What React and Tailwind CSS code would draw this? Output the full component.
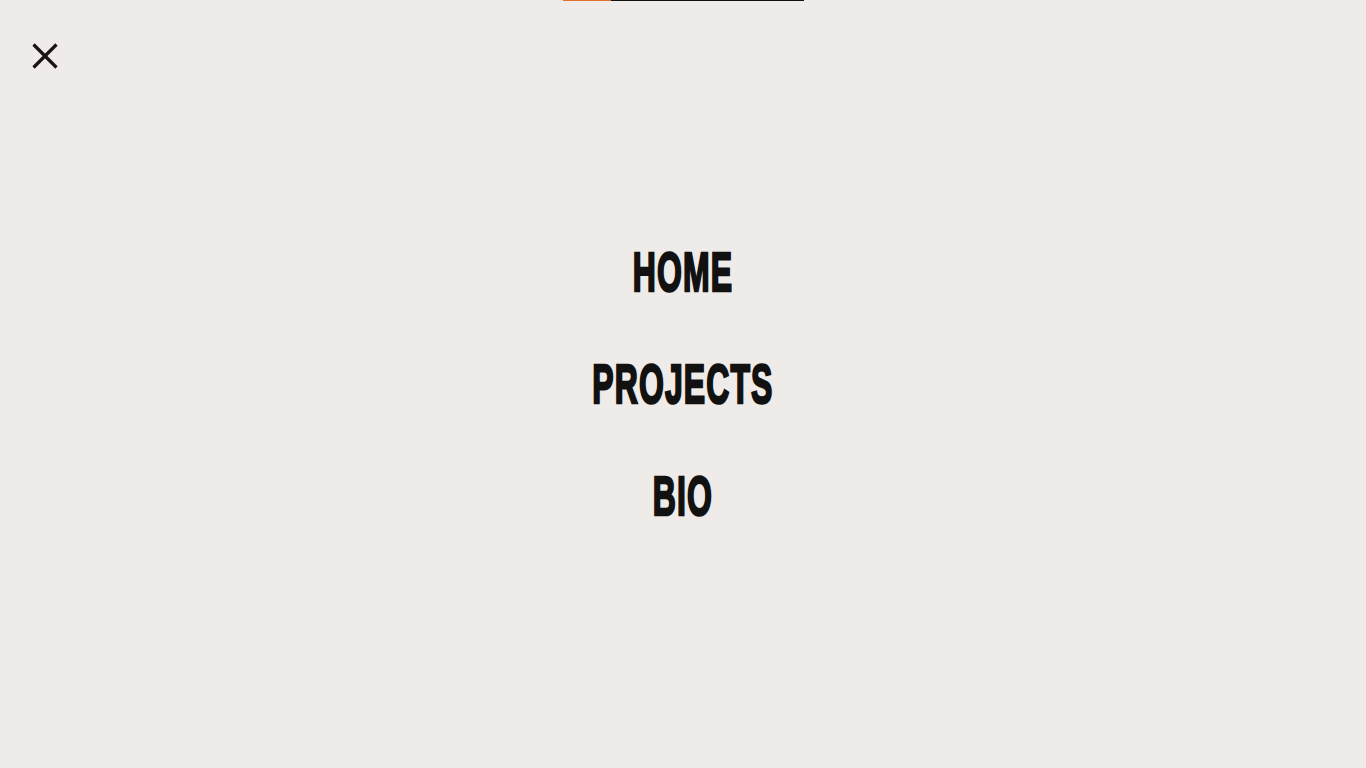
export default function App() {
  const links = ['HOME', 'PROJECTS', 'BIO'];
  return (
    <div className="relative h-screen w-full overflow-hidden bg-[#efebe8]">
      {/* progress bar */}
      <div className="absolute top-0 left-[563px] flex h-px w-[241px]">
        <div className="w-[48px] bg-[#e0702a]" />
        <div className="flex-1 bg-[#111111]" />
      </div>

      {/* close */}
      <button type="button" className="absolute left-[30px] top-[41px] flex h-[30px] w-[30px] items-center justify-center text-[#1a1214]">
        <svg className="h-[30px] w-[30px]" viewBox="0 0 30 30" fill="none" stroke="currentColor" strokeWidth="3.2">
          <line x1="3.5" y1="3.5" x2="26.5" y2="26.5" />
          <line x1="26.5" y1="3.5" x2="3.5" y2="26.5" />
        </svg>
      </button>

      <nav className="flex h-full flex-col items-center justify-center">
        {links.map((l) => (
          <a
            key={l}
            href="#"
            className="block h-[112px] text-center text-[56px] leading-[112px] font-bold text-[#111111] font-['Liberation_Sans',sans-serif] tracking-[2px] [-webkit-text-stroke:2.5px_#111111]"
          >
            <span className="inline-block scale-x-[0.57]">{l}</span>
          </a>
        ))}
      </nav>
    </div>
  );
}
